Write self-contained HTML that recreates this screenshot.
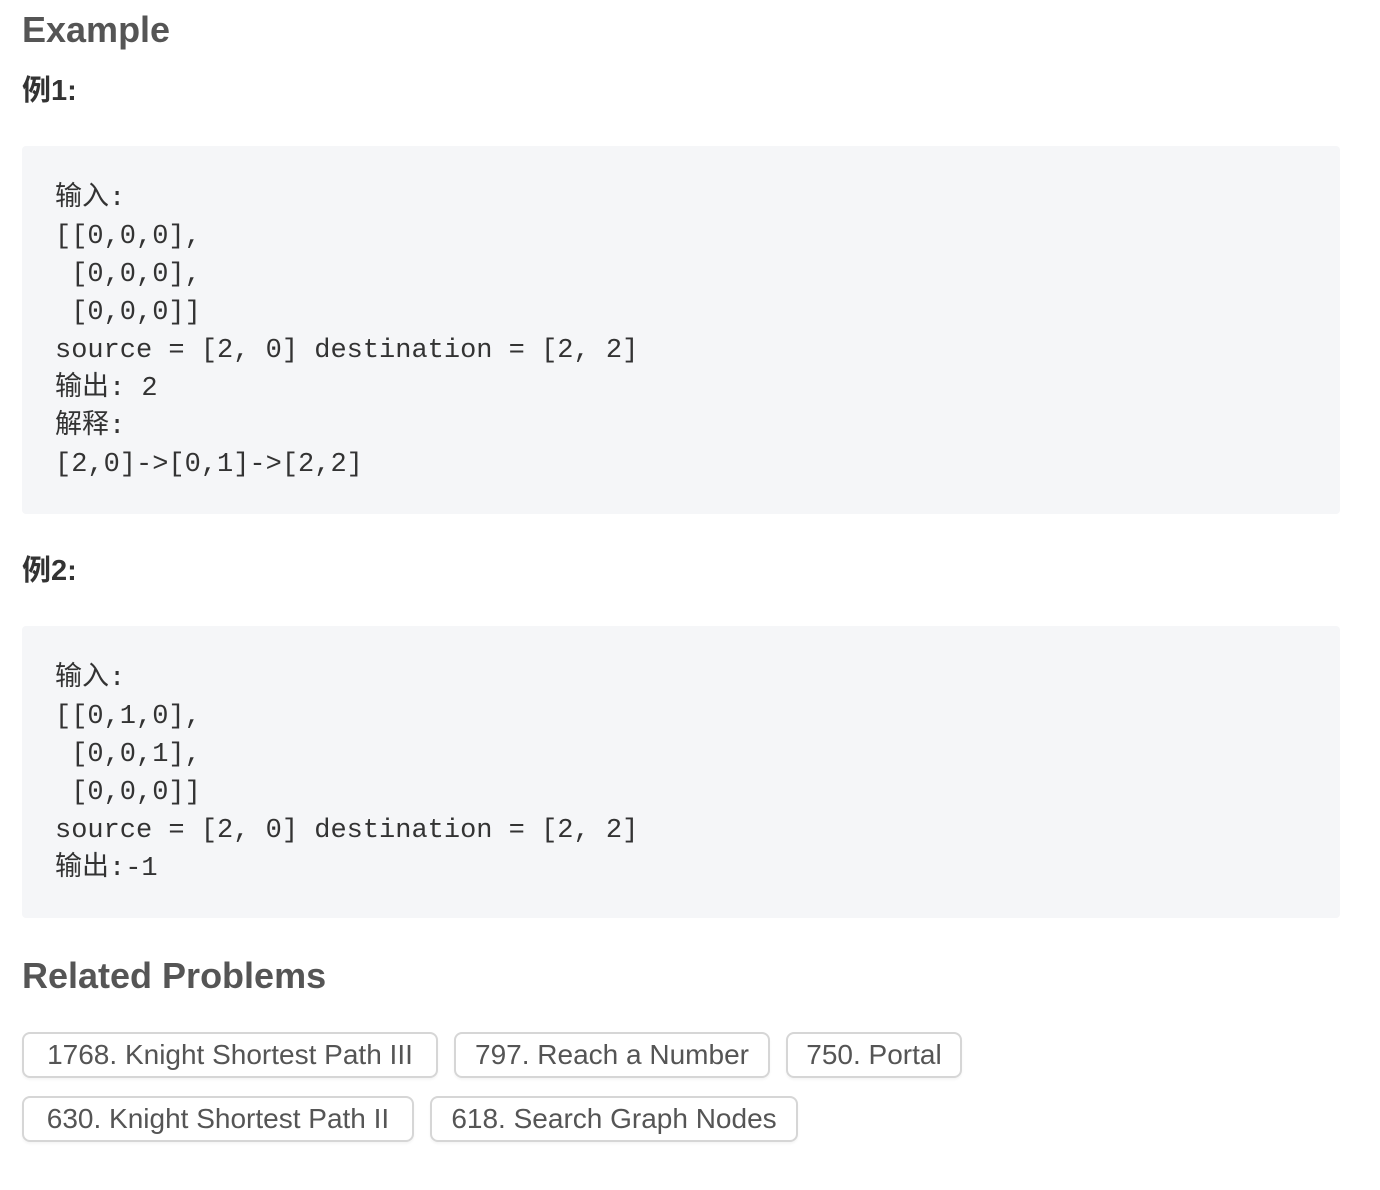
<!DOCTYPE html>
<html><head><meta charset="utf-8"><style>
body{margin:0;background:#fff;width:1380px;height:1190px;overflow:hidden;font-family:"Liberation Sans","Noto Sans CJK SC",sans-serif;color:#555;position:relative}
.h{position:absolute;left:22px;font-weight:bold;margin:0}
.pre{position:absolute;left:22px;width:1318px;background:#f5f6f8;border-radius:4px;box-sizing:border-box;padding:34px 0 0 33px;font-family:"Liberation Mono","Noto Sans CJK SC",monospace;font-size:27px;line-height:38px;color:#333;white-space:pre;margin:0}
.tag{position:absolute;height:46px;box-sizing:border-box;border:2px solid #d6d6d6;border-radius:8px;font-size:28px;line-height:42px;color:#555;text-align:center;white-space:nowrap;overflow:hidden;box-shadow:0 2px 2px rgba(0,0,0,0.04)}
</style></head><body>
<div class="h" style="top:8px;font-size:36px;line-height:44px">Example</div>
<div class="h" style="top:72px;font-size:29px;line-height:38px;color:#333">例1:</div>
<div class="pre" style="top:146px;height:368px">输入:
[[0,0,0],
 [0,0,0],
 [0,0,0]]
source = [2, 0] destination = [2, 2]
输出: 2
解释:
[2,0]->[0,1]->[2,2]</div>
<div class="h" style="top:552px;font-size:29px;line-height:38px;color:#333">例2:</div>
<div class="pre" style="top:626px;height:292px">输入:
[[0,1,0],
 [0,0,1],
 [0,0,0]]
source = [2, 0] destination = [2, 2]
输出:-1</div>
<div class="h" style="top:954px;font-size:36px;line-height:44px">Related Problems</div>
<div class="tag" style="left:22px;top:1032px;width:416px">1768. Knight Shortest Path III</div>
<div class="tag" style="left:454px;top:1032px;width:316px">797. Reach a Number</div>
<div class="tag" style="left:786px;top:1032px;width:176px">750. Portal</div>
<div class="tag" style="left:22px;top:1096px;width:392px">630. Knight Shortest Path II</div>
<div class="tag" style="left:430px;top:1096px;width:368px">618. Search Graph Nodes</div>
</body></html>
